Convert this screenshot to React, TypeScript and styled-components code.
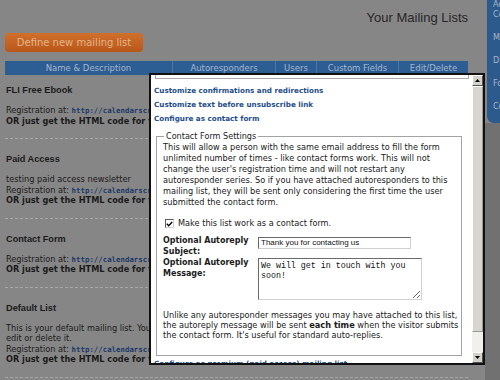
import React from 'react'
import styled, { createGlobalStyle } from 'styled-components'

const SANS = '"DejaVu Sans", Verdana, sans-serif'
const ARIAL = '"Liberation Sans", Arial, sans-serif'

const GlobalStyle = createGlobalStyle`
  html, body {
    margin: 0;
    padding: 0;
  }
  body {
    width: 500px;
    height: 380px;
    overflow: hidden;
    background: #868686;
    font-family: ${SANS};
    color: #1b1b1b;
  }
`

const Page = styled.div`
  position: relative;
  display: flex;
  width: 500px;
  height: 380px;
  overflow: hidden;
`

const Main = styled.div`
  flex: 0 0 485px;
  box-sizing: border-box;
  padding: 0 17px 0 5px;
`

const PageTitle = styled.h1`
  margin: 0;
  padding-top: 10px;
  text-align: right;
  font: normal 13px/15px ${ARIAL};
  color: #272727;
`

const DefineButton = styled.button`
  display: block;
  margin-top: 8px;
  width: 138px;
  height: 19px;
  padding: 0;
  border: 0;
  border-radius: 4px;
  background: linear-gradient(#d0702a, #b8571b);
  color: #e3b488;
  font: 10px ${SANS};
`

const HeaderBar = styled.div`
  display: grid;
  grid-template-columns: 167px 103px 41px 82px 70px;
  margin-top: 9px;
  height: 14px;
  background: #2c5d93;
`

const HeaderCell = styled.div`
  display: flex;
  align-items: center;
  justify-content: center;
  font-size: 8.5px;
  color: #a7b7cc;
  white-space: nowrap;

  & + & {
    border-left: 1px solid #4c76a5;
  }
`

const Entry = styled.div`
  padding: 14px 0 12px 1px;
  border-bottom: 1px dashed #a7a7a7;

  &:first-child {
    padding-top: 9px;
  }
`

const EntryTitle = styled.div`
  margin-bottom: 9px;
  font: bold 9.2px/12px ${ARIAL};
  color: #1b1b1b;
`

const EntryLine = styled.div<{ $bold?: boolean }>`
  font-size: 8.2px;
  line-height: 10.5px;
  font-weight: ${(p) => (p.$bold ? 'bold' : 'normal')};
  white-space: nowrap;
`

const Url = styled.span`
  font: bold 7.4px "DejaVu Sans Mono", monospace;
  color: #1c3966;
`

const Sidebar = styled.div`
  flex: 1;
  display: flex;
  flex-direction: column;
  padding-left: 2px;
`

const NavPanel = styled.nav`
  height: 123px;
  box-sizing: border-box;
  padding-left: 6px;
  background: #2c5a8d;
  border-bottom-left-radius: 7px;
  overflow: hidden;
`

const SidebarFill = styled.div`
  flex: 1;
  margin-left: -2px;
  background: #717171;
`

const NavItem = styled.div`
  margin-bottom: 13px;
  font-size: 8px;
  line-height: 10px;
  color: #a9b5c5;
  white-space: nowrap;
`

const Modal = styled.div`
  position: absolute;
  left: 149px;
  top: 73px;
  width: 336px;
  height: 292px;
  box-sizing: border-box;
  display: flex;
  border: 2px solid #111;
  background: #fff;
`

const ModalBody = styled.div`
  flex: 1;
  min-width: 0;
  overflow: hidden;
  padding-left: 3px;
`

const ClippedBox = styled.div`
  box-sizing: border-box;
  width: 314px;
  height: 4px;
  margin-left: 1px;
  border: 1px solid #a9a9a9;
  border-top: 0;
`

const ActionLinks = styled.div`
  margin-top: 5px;
`

const ActionLink = styled.a`
  display: block;
  font: bold 7.2px/14px ${SANS};
  color: #1f4e8a;
  text-decoration: none;
  white-space: nowrap;
`

const Settings = styled.fieldset`
  margin: 5px 10px 0 2px;
  padding: 0 6px 15px;
  border: 1px solid #a3a3a3;
  min-inline-size: 0;
`

const Legend = styled.legend`
  margin-left: 1px;
  padding: 0 2px;
  font-size: 8.1px;
  line-height: 11px;
  color: #222;
`

const Para = styled.p<{ $tight?: boolean }>`
  margin: ${(p) => (p.$tight ? '10px 0 0' : '0')};
  font-size: 8.2px;
  line-height: ${(p) => (p.$tight ? '10px' : '11px')};
  color: #1a1a1a;
  white-space: nowrap;
`

const CheckRow = styled.label`
  display: flex;
  align-items: center;
  gap: 4px;
  margin-top: 10px;
  padding-left: 2px;
  font-size: 8.2px;
  line-height: 11px;
  color: #1a1a1a;
`

const CheckBox = styled.span`
  display: flex;
  align-items: center;
  justify-content: center;
  box-sizing: border-box;
  width: 9px;
  height: 9px;
  border: 1px solid;
  border-color: #5a5a5a #cfcfcf #cfcfcf #5a5a5a;
  background: #fff;
`

const FormGrid = styled.div`
  display: grid;
  grid-template-columns: 95px auto;
  row-gap: 1px;
  align-items: start;
  margin-top: 7px;
`

const FieldLabel = styled.div`
  font-weight: bold;
  font-size: 8px;
  line-height: 10.5px;
  color: #1b1b1b;
`

const TextInput = styled.input`
  box-sizing: border-box;
  width: 153px;
  height: 12.5px;
  margin: 0.5px 0 0;
  padding: 0 2px;
  border: 1px solid;
  border-color: #6a6a6a #d0d0d0 #d0d0d0 #6a6a6a;
  font: 8px ${ARIAL};
  color: #111;
  outline: none;
`

const TextArea = styled.textarea`
  display: block;
  box-sizing: border-box;
  width: 164px;
  height: 42px;
  margin: 0;
  padding: 2px 2px 0;
  border: 1px solid;
  border-color: #6a6a6a #d0d0d0 #d0d0d0 #6a6a6a;
  font: 8.3px/10px "Liberation Mono", "Courier New", monospace;
  color: #111;
  outline: none;
`

const PremiumLink = styled(ActionLink)`
  margin-top: 1px;
`

const Scrollbar = styled.div`
  flex: 0 0 11px;
  display: flex;
  flex-direction: column;
  background: #f2f0ec;
`

const ScrollButton = styled.div`
  display: flex;
  align-items: center;
  justify-content: center;
  box-sizing: border-box;
  height: 11px;
  background: #d4d0c8;
  border: 1px solid;
  border-color: #fff #555 #555 #fff;
`

const ScrollThumb = styled.div`
  box-sizing: border-box;
  height: 246px;
  background: #d8d5ce;
  border: 1px solid;
  border-color: #fff #9a9893 #9a9893 #fff;
`

const ScrollTrack = styled.div`
  flex: 1;
`

const Arrow = ({ down }: { down?: boolean }) => (
  <svg width="5" height="3" viewBox="0 0 5 3">
    <polygon points={down ? '0,0 5,0 2.5,3' : '0,3 5,3 2.5,0'} fill="#000" />
  </svg>
)

type EntryData = {
  title: string
  description?: string[]
}

const ENTRIES: EntryData[] = [
  { title: 'FLI Free Ebook' },
  { title: 'Paid Access', description: ['testing paid access newsletter'] },
  { title: 'Contact Form' },
  {
    title: 'Default List',
    description: ['This is your default mailing list. You can not', 'edit or delete it.'],
  },
]

const COLUMNS = ['Name & Description', 'Autoresponders', 'Users', 'Custom Fields', 'Edit/Delete']

export default function App() {
  return (
    <>
      <GlobalStyle />
      <Page>
        <Main>
          <PageTitle>Your Mailing Lists</PageTitle>
          <DefineButton>Define new mailing list</DefineButton>
          <HeaderBar>
            {COLUMNS.map((c) => (
              <HeaderCell key={c}>{c}</HeaderCell>
            ))}
          </HeaderBar>
          <div>
            {ENTRIES.map((e, i) => (
              <Entry key={e.title}>
                <EntryTitle>{e.title}</EntryTitle>
                {e.description?.map((d) => (
                  <EntryLine key={d}>{d}</EntryLine>
                ))}
                <EntryLine>
                  Registration at:{' '}
                  <Url>http://calendarscripts.info/bfree/register.php?list={i + 1}</Url>
                </EntryLine>
                <EntryLine $bold>OR just get the HTML code for the form</EntryLine>
              </Entry>
            ))}
          </div>
        </Main>
        <Sidebar>
          <NavPanel>
            <NavItem>
              Account
              <br />
              Center
            </NavItem>
            <NavItem>Mailing Lists</NavItem>
            <NavItem>Drafts</NavItem>
            <NavItem>Forms</NavItem>
            <NavItem>Configuration</NavItem>
          </NavPanel>
          <SidebarFill />
        </Sidebar>

        <Modal>
          <ModalBody>
            <ClippedBox />
            <ActionLinks>
              <ActionLink href="#">Customize confirmations and redirections</ActionLink>
              <ActionLink href="#">Customize text before unsubscribe link</ActionLink>
              <ActionLink href="#">Configure as contact form</ActionLink>
            </ActionLinks>
            <Settings>
              <Legend>Contact Form Settings</Legend>
              <Para>
                This will allow a person with the same email address to fill the form
                <br />
                unlimited number of times - like contact forms work. This will not
                <br />
                change the user's registration time and will not restart any
                <br />
                autoresponder series. So if you have attached autoresponders to this
                <br />
                mailing list, they will be sent only considering the first time the user
                <br />
                submitted the contact form.
              </Para>
              <CheckRow>
                <CheckBox>
                  <svg width="7" height="6" viewBox="0 0 7 6">
                    <path d="M0.8 2.8 L2.7 4.7 L6.2 1" stroke="#000" strokeWidth="1.4" fill="none" />
                  </svg>
                </CheckBox>
                Make this list work as a contact form.
              </CheckRow>
              <FormGrid>
                <FieldLabel>
                  Optional Autoreply
                  <br />
                  Subject:
                </FieldLabel>
                <TextInput type="text" defaultValue="Thank you for contacting us" />
                <FieldLabel>
                  Optional Autoreply
                  <br />
                  Message:
                </FieldLabel>
                <TextArea defaultValue="We will get in touch with you soon!" />
              </FormGrid>
              <Para $tight>
                Unlike any autoresponder messages you may have attached to this list,
                <br />
                the autoreply message will be sent <b>each time</b> when the visitor submits
                <br />
                the contact form. It's useful for standard auto-replies.
              </Para>
            </Settings>
            <PremiumLink href="#">Configure as premium (paid access) mailing list</PremiumLink>
          </ModalBody>
          <Scrollbar>
            <ScrollButton>
              <Arrow />
            </ScrollButton>
            <ScrollThumb />
            <ScrollTrack />
            <ScrollButton>
              <Arrow down />
            </ScrollButton>
          </Scrollbar>
        </Modal>
      </Page>
    </>
  )
}
